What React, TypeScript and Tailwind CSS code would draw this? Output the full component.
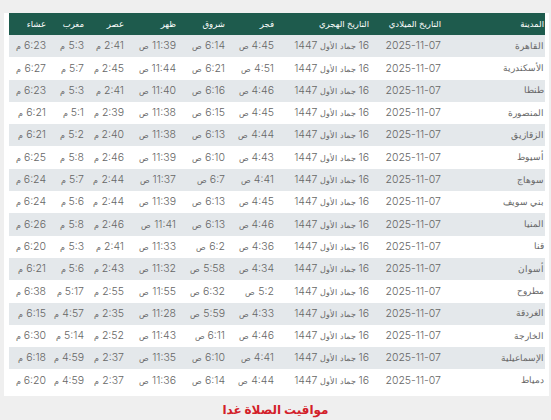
const rows: [string, string[]][] = [
  ["القاهرة", ["4:45", "6:14", "11:39", "2:41", "5:3", "6:23"]],
  ["الأسكندرية", ["4:51", "6:21", "11:44", "2:45", "5:7", "6:27"]],
  ["طنطا", ["4:46", "6:16", "11:40", "2:41", "5:3", "6:23"]],
  ["المنصورة", ["4:45", "6:15", "11:38", "2:39", "5:1", "6:21"]],
  ["الزقازيق", ["4:44", "6:13", "11:38", "2:40", "5:2", "6:21"]],
  ["أسيوط", ["4:43", "6:10", "11:39", "2:46", "5:8", "6:25"]],
  ["سوهاج", ["4:41", "6:7", "11:37", "2:44", "5:7", "6:24"]],
  ["بني سويف", ["4:45", "6:13", "11:39", "2:44", "5:6", "6:24"]],
  ["المنيا", ["4:46", "6:13", "11:41", "2:46", "5:8", "6:26"]],
  ["قنا", ["4:36", "6:2", "11:33", "2:41", "5:3", "6:20"]],
  ["أسوان", ["4:34", "5:58", "11:32", "2:43", "5:6", "6:21"]],
  ["مطروح", ["5:2", "6:32", "11:55", "2:55", "5:17", "6:38"]],
  ["الغردقة", ["4:33", "5:59", "11:28", "2:35", "4:57", "6:15"]],
  ["الخارجة", ["4:46", "6:11", "11:43", "2:52", "5:14", "6:30"]],
  ["الإسماعيلية", ["4:41", "6:10", "11:35", "2:37", "4:59", "6:18"]],
  ["دمياط", ["4:44", "6:14", "11:36", "2:37", "4:59", "6:20"]],
];

const suffix = ["ص", "ص", "ص", "م", "م", "م"];

const PrayerTimes = () => {
  return (
    <div
      dir="rtl"
      className="w-full h-[420px] bg-[#efefef] pt-[13px] px-[2px]"
      style={{ fontFamily: 'Inter, "DejaVu Sans", sans-serif' }}
    >
      <div className="bg-white px-1 pb-1 w-[545px]">
        <table className="table-fixed border-collapse w-[536px] text-right">
          <thead>
            <tr className="bg-[#1e5b4d] text-white text-[8.5px] h-[22px]">
              <th className="w-[103px] pr-[1px] font-medium">المدينة</th>
              <th className="w-[72px] pr-[1px] font-medium">التاريخ الميلادي</th>
              <th className="w-[95px] pr-[1px] font-medium">التاريخ الهجري</th>
              <th className="w-[49px] pr-[1px] font-medium">فجر</th>
              <th className="w-[49px] pr-[1px] font-medium">شروق</th>
              <th className="w-[52px] pr-[1px] font-medium">ظهر</th>
              <th className="w-[40px] pr-[1px] font-medium">عصر</th>
              <th className="w-[38px] pr-[1px] font-medium">مغرب</th>
              <th className="w-[38px] pr-[1px] font-medium">عشاء</th>
            </tr>
          </thead>
          <tbody className="text-[#666] font-light">
            {rows.map(([city, times], i) => (
              <tr key={city} className={`h-[22.3px] ${i % 2 === 0 ? "bg-[#e4e8eb]" : "bg-white"}`}>
                <td className="pr-[1px] text-[8.5px]">{city}</td>
                <td className="pr-[1px] text-[10.5px]">2025-11-07</td>
                <td className="pr-[1px] text-[10.5px] whitespace-nowrap">
                  16 <span className="text-[8px]">جماد الأول</span> 1447
                </td>
                {times.map((t, j) => (
                  <td key={j} className="pr-[1px] text-[10.5px] whitespace-nowrap">
                    {t} <span className="text-[8px]">{suffix[j]}</span>
                  </td>
                ))}
              </tr>
            ))}
          </tbody>
        </table>
      </div>
      <p className="text-center text-[12px] font-bold text-[#d32029] mt-[5px]">
        مواقيت الصلاة غدا
      </p>
    </div>
  );
};

export default function App() {
  return <PrayerTimes />;
}
